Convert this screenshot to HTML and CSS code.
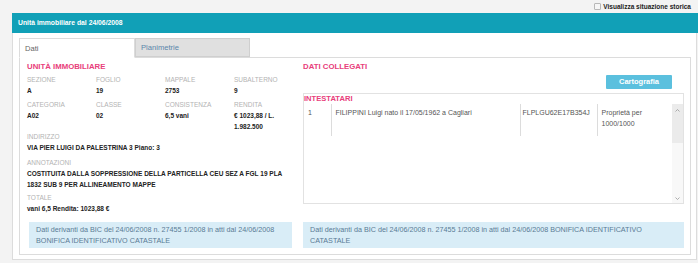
FILE: index.html
```html
<html><head><meta http-equiv="Content-Type" content="text/html; charset=utf-8">
    <link rel="stylesheet" href="styles.css">
</head>
<body>

<div class="topbar">
    <label class="storico"><span class="check"></span>Visualizza situazione storica</label>
</div>

<div class="panel">
    <div class="panel-head">Unità immobiliare dal 24/06/2008</div>
    <div class="panel-body">
        <div class="tabs">
            <div class="tab active">Dati</div>
            <div class="tab inactive">Planimetrie</div>
        </div>
        <div class="tab-content">
            <div class="cols">
                <!-- colonna sinistra: dati dell'unita -->
                <div>
                    <div class="title">UNITÀ IMMOBILIARE</div>
                    <div class="fields">
                        <div><div class="label">Sezione</div><div class="value">A</div></div>
                        <div><div class="label">Foglio</div><div class="value">19</div></div>
                        <div><div class="label">Mappale</div><div class="value">2753</div></div>
                        <div><div class="label">Subalterno</div><div class="value">9</div></div>
                        <div><div class="label">Categoria</div><div class="value">A02</div></div>
                        <div><div class="label">Classe</div><div class="value">02</div></div>
                        <div><div class="label">Consistenza</div><div class="value">6,5 vani</div></div>
                        <div><div class="label">Rendita</div><div class="value">€ 1023,88 / L. 1.982.500</div></div>
                    </div>
                    <div class="field-wide addr">
                        <div class="label">Indirizzo</div>
                        <div class="value">VIA PIER LUIGI DA PALESTRINA 3 Piano: 3</div>
                    </div>
                    <div class="field-wide">
                        <div class="label">Annotazioni</div>
                        <div class="value">COSTITUITA DALLA SOPPRESSIONE DELLA PARTICELLA CEU SEZ A FGL 19 PLA 1832 SUB 9 PER ALLINEAMENTO MAPPE</div>
                    </div>
                    <div class="field-wide tot">
                        <div class="label">Totale</div>
                        <div class="value">vani 6,5 Rendita: 1023,88 €</div>
                    </div>
                </div>

                <!-- colonna destra: dati collegati -->
                <div>
                    <div class="title">DATI COLLEGATI</div>
                    <div class="btn-row"><div class="btn">Cartografia</div></div>
                    <div class="box">
                        <div class="title box-title">INTESTATARI</div>
                        <div class="scroll">
                            <div class="table-wrap">
                                <table class="owners">
                                    <colgroup><col style="width:27px"><col style="width:189px"><col style="width:77px"><col style="width:75px"></colgroup>
                                    <tr>
                                        <td>1</td>
                                        <td>FILIPPINI Luigi nato il 17/05/1962 a Cagliari</td>
                                        <td class="cf">FLPLGU62E17B354J</td>
                                        <td>Proprietà per 1000/1000</td>
                                    </tr>
                                </table>
                            </div>
                            <div class="sb">
                                <div class="sb-thumb">
                                    <svg width="5" height="3" viewBox="0 0 5 3"><path d="M0.5 2.5 L2.5 0.5 L4.5 2.5" fill="none" stroke="#999" stroke-width="0.8"/></svg>
                                </div>
                                <div class="sb-down">
                                    <svg width="5" height="3" viewBox="0 0 5 3"><path d="M0.5 0.5 L2.5 2.5 L4.5 0.5" fill="none" stroke="#999" stroke-width="0.8"/></svg>
                                </div>
                            </div>
                        </div>
                    </div>
                </div>
            </div>

            <div class="notes">
                <div class="note">Dati derivanti da BIC del 24/06/2008 n. 27455 1/2008 in atti dal 24/06/2008 BONIFICA IDENTIFICATIVO CATASTALE</div>
                <div class="note">Dati derivanti da BIC del 24/06/2008 n. 27455 1/2008 in atti dal 24/06/2008 BONIFICA IDENTIFICATIVO CATASTALE</div>
            </div>
        </div>
    </div>
</div>

</body></html>
```

FILE: styles.css
```css
body {
    margin: 0;
    background-color: #f3f3f3;
    font-family: "Liberation Sans", Arial, sans-serif;
    color: #333;
}

.topbar {
    height: 13px;
    display: flex;
    justify-content: flex-end;
    align-items: center;
    padding-right: 7px;
}

.storico {
    display: flex;
    align-items: center;
    gap: 2px;
    font-size: 6.5px;
    font-weight: bold;
    color: #222;
}

.check {
    width: 5px;
    height: 5px;
    border: 1px solid #b8b8b8;
    background-color: #f6f6f6;
    border-radius: 1px;
}

.panel {
    margin-left: 12px;
}

.panel-head {
    background-color: #11a0b7;
    color: #fff;
    font-weight: bold;
    font-size: 6.8px;
    height: 20px;
    line-height: 20px;
    padding-left: 6px;
}

.panel-body {
    background-color: #fff;
    border: 1px solid #dcdcdc;
    border-top: none;
    margin-right: 1px;
    padding: 5px 5px 4px 6px;
}

.tabs {
    display: flex;
}

.tab {
    box-sizing: border-box;
    height: 20px;
    line-height: 19px;
    padding-left: 5px;
    font-size: 7.6px;
    border: 1px solid #dcdcdc;
}

.tab.active {
    width: 116px;
    background-color: #fff;
    border-bottom-color: #fff;
    margin-bottom: -1px;
    position: relative;
    color: #666;
}

.tab.inactive {
    width: 115px;
    height: 19px;
    line-height: 18px;
    background-color: #e0e0e0;
    border-color: #cfcfcf;
    color: #5a86ab;
}

.tab-content {
    border: 1px solid #dcdcdc;
    padding: 4px 6px 6px 7px;
}

.cols {
    display: grid;
    grid-template-columns: 265px 1fr;
    column-gap: 11px;
}

.title {
    color: #e8407b;
    font-weight: bold;
    font-size: 7.8px;
    line-height: 10px;
}

.fields {
    display: grid;
    grid-template-columns: repeat(4, 69px);
    row-gap: 4px;
    margin-top: 3px;
}

.label {
    color: #b3b3b3;
    font-size: 6.5px;
    line-height: 10px;
    text-transform: uppercase;
}

.value {
    color: #222;
    font-weight: bold;
    font-size: 6.5px;
    line-height: 11px;
}

.field-wide {
    margin-top: 5px;
}

.field-wide.addr {
    margin-top: 0;
}

.field-wide.tot {
    margin-top: 3px;
}

.btn-row {
    display: flex;
    justify-content: flex-end;
    margin-top: 3px;
    padding-right: 12px;
}

.btn {
    width: 66px;
    height: 14px;
    line-height: 14px;
    text-align: center;
    background-color: #5bc0de;
    color: #fff;
    font-size: 7.5px;
    font-weight: bold;
    border-radius: 1px;
}

.box {
    margin-top: 4px;
    border: 1px solid #e2e2e2;
}

.box-title {
    font-size: 7.6px;
}

.scroll {
    height: 99px;
    display: flex;
}

.table-wrap {
    flex: 1;
}

.owners {
    width: 100%;
    border-collapse: collapse;
    table-layout: fixed;
}

.owners td {
    vertical-align: top;
    height: 32px;
    padding: 3px 4px;
    font-size: 7px;
    line-height: 11px;
    color: #555;
    border-left: 1px solid #dcdcdc;
}

.owners td:first-child {
    border-left: none;
}

.owners td.cf {
    padding-left: 2px;
}

.sb {
    width: 11px;
    display: flex;
    flex-direction: column;
    justify-content: space-between;
    background-color: #f8f8f8;
}

.sb-thumb {
    height: 34px;
    padding-top: 5px;
    display: flex;
    justify-content: center;
    background-color: #ebebeb;
}

.sb-down {
    display: flex;
    justify-content: center;
    padding-bottom: 3px;
}

.notes {
    display: grid;
    grid-template-columns: 263px 1fr;
    column-gap: 11px;
    margin-top: 8px;
    padding-left: 2px;
}

.note {
    background-color: #d9edf7;
    color: #5a7b95;
    font-size: 7.2px;
    line-height: 11px;
    padding: 2px 7px;
}
```
